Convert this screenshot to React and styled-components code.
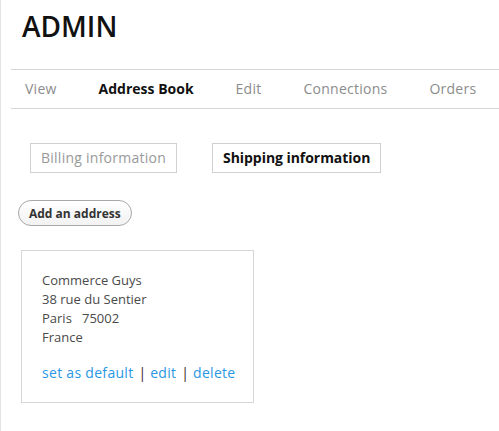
import React from 'react';
import styled, { createGlobalStyle } from 'styled-components';

const GlobalStyle = createGlobalStyle`
    html, body {
        margin: 0;
        padding: 0;
        background: #ffffff;
    }
    body {
        font-family: "Open Sans", "Liberation Sans", sans-serif;
    }
`;

const Page = styled.div`
    min-height: 431px;
    border-left: 1px solid #e3e3e3;
    box-sizing: border-box;
    overflow: hidden;
`;

const Title = styled.h1`
    margin: 9px 0 0 21px;
    font-size: 28px;
    line-height: 35px;
    font-weight: 600;
    color: #111111;
`;

const Tabs = styled.ul`
    display: flex;
    list-style: none;
    margin: 25px 0 0 10px;
    padding: 0 0 0 14px;
    gap: 42px;
    border-top: 1px solid #d6d6d6;
    border-bottom: 1px solid #d6d6d6;
`;

const Tab = styled.li`
    font-size: 14px;
    line-height: 38px;
    white-space: nowrap;
    letter-spacing: ${(p) => (p.$active ? '0' : '0.25px')};
    color: ${(p) => (p.$active ? '#111111' : '#8c8c8c')};
    font-weight: ${(p) => (p.$active ? 700 : 400)};
`;

const Switcher = styled.div`
    display: flex;
    gap: 35px;
    margin: 34px 0 0 29px;
`;

const TypeButton = styled.div`
    height: 30px;
    box-sizing: border-box;
    padding: 0 10px;
    border: 1px solid #d0d0d0;
    font-size: 14px;
    line-height: 28px;
    white-space: nowrap;
    letter-spacing: ${(p) => (p.$active ? '-0.05px' : '0.25px')};
    color: ${(p) => (p.$active ? '#111111' : '#999999')};
    font-weight: ${(p) => (p.$active ? 700 : 400)};
`;

const AddButton = styled.button`
    display: block;
    margin: 27px 0 0 17px;
    height: 26px;
    padding: 0 10px;
    border: 1px solid #a8a8a8;
    border-radius: 13px;
    background: linear-gradient(#ffffff, #f2f2f2);
    font-family: "Open Sans", "Liberation Sans", sans-serif;
    font-size: 12px;
    font-weight: 700;
    color: #333333;
    cursor: pointer;
`;

const Card = styled.div`
    width: 233px;
    box-sizing: border-box;
    margin: 24px 0 0 20px;
    padding: 20px 20px 19px 20px;
    border: 1px solid #d6d6d6;
`;

const AddressLine = styled.div`
    font-size: 13px;
    line-height: 19px;
    color: #4a4a4a;
    white-space: pre;
`;

const Actions = styled.div`
    margin-top: 16px;
    font-size: 14px;
    line-height: 20px;
    letter-spacing: 0.3px;
    white-space: nowrap;
`;

const ActionLink = styled.a`
    color: #2a97e4;
    text-decoration: none;
`;

const Sep = styled.span`
    color: #3a2818;
    margin: 0 4px 0 5px;
    letter-spacing: 0;
`;

const tabs = ['View', 'Address Book', 'Edit', 'Connections', 'Orders'];
const address = ['Commerce Guys', '38 rue du Sentier', 'Paris   75002', 'France'];

const App = () => {
    return (
        <>
            <GlobalStyle />
            <Page>
                <Title>ADMIN</Title>
                <Tabs>
                    {tabs.map((t) => (
                        <Tab key={t} $active={t === 'Address Book'}>{t}</Tab>
                    ))}
                </Tabs>
                <Switcher>
                    <TypeButton>Billing information</TypeButton>
                    <TypeButton $active>Shipping information</TypeButton>
                </Switcher>
                <AddButton type="button">Add an address</AddButton>
                <Card>
                    {address.map((line) => (
                        <AddressLine key={line}>{line}</AddressLine>
                    ))}
                    <Actions>
                        <ActionLink href="#">set as default</ActionLink>
                        <Sep>|</Sep>
                        <ActionLink href="#">edit</ActionLink>
                        <Sep>|</Sep>
                        <ActionLink href="#">delete</ActionLink>
                    </Actions>
                </Card>
            </Page>
        </>
    );
};

export default App;
